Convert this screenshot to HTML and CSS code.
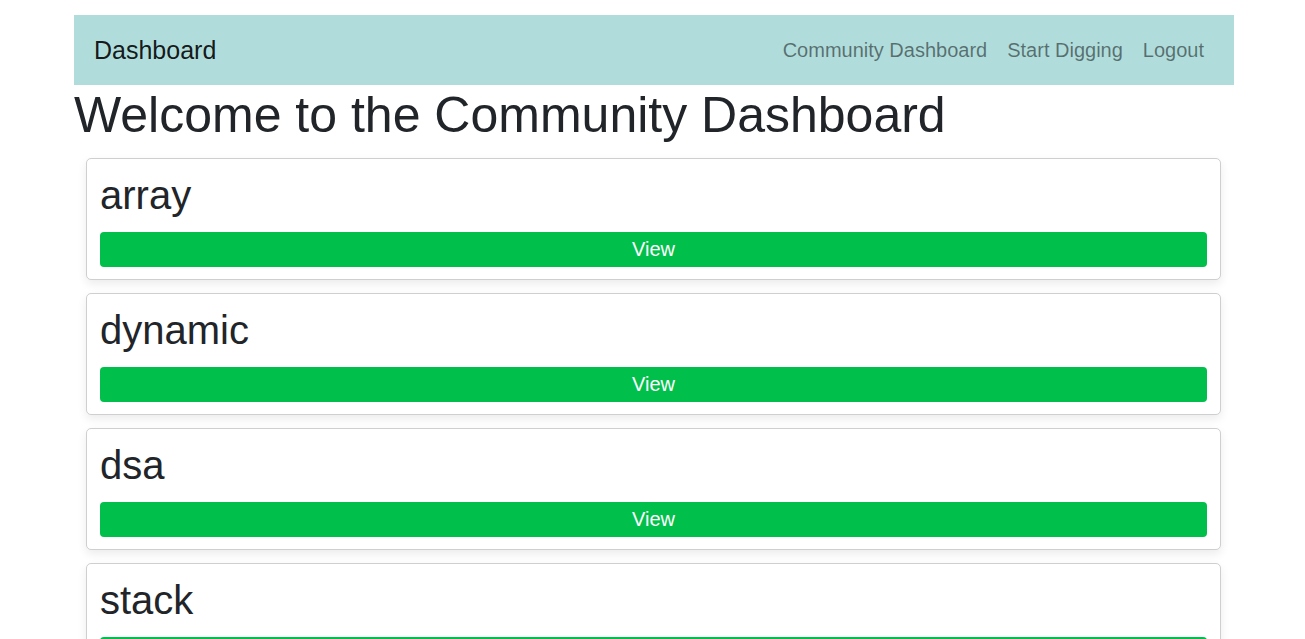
FILE: index.html
```html
<!DOCTYPE html>
<html lang="en">
<head>
<meta charset="utf-8">
<title>Community Dashboard</title>
<link rel="stylesheet" href="styles.css">
</head>
<body>
<div class="container">
  <nav class="navbar">
    <a class="brand" href="#">Dashboard</a>
    <ul class="nav-links">
      <li><a href="#">Community Dashboard</a></li>
      <li><a href="#">Start Digging</a></li>
      <li><a href="#">Logout</a></li>
    </ul>
  </nav>
  <h1 class="page-title">Welcome to the Community Dashboard</h1>
  <div class="card-list">
    <div class="card">
      <h2 class="card-title">array</h2>
      <button class="btn-view">View</button>
    </div>
    <div class="card">
      <h2 class="card-title">dynamic</h2>
      <button class="btn-view">View</button>
    </div>
    <div class="card">
      <h2 class="card-title">dsa</h2>
      <button class="btn-view">View</button>
    </div>
    <div class="card">
      <h2 class="card-title">stack</h2>
      <button class="btn-view">View</button>
    </div>
  </div>
</div>
</body>
</html>
```

FILE: styles.css
```css
* { box-sizing: border-box; }
html, body { margin: 0; padding: 0; background: #fff; }
body {
  font-family: "Liberation Sans", Arial, sans-serif;
  color: #212529;
}
.container {
  width: 1160px;
  margin: 15px 0 0 74px;
}
.navbar {
  height: 70px;
  background: #b0dddc;
  display: flex;
  align-items: center;
  justify-content: space-between;
  padding: 0 20px;
}
.brand {
  font-size: 25px;
  color: rgba(0, 0, 0, 0.9);
  text-decoration: none;
}
.nav-links {
  list-style: none;
  margin: 0;
  padding: 0;
  display: flex;
}
.nav-links a {
  display: block;
  padding: 0 10px;
  font-size: 20px;
  color: rgba(0, 0, 0, 0.5);
  text-decoration: none;
}
.page-title {
  margin: 0;
  font-size: 50px;
  font-weight: 400;
  line-height: 60px;
}
.card-list {
  display: flex;
  flex-direction: column;
  gap: 13px;
  padding: 13px 13px 20px 12px;
}
.card {
  border: 1px solid #cfcfcf;
  border-radius: 5px;
  padding: 12px 13px;
  background: #fff;
  box-shadow: 0 4px 10px rgba(0, 0, 0, 0.08);
}
.card-title {
  margin: 0 0 13px;
  font-size: 40px;
  font-weight: 400;
  line-height: 48px;
}
.btn-view {
  display: block;
  width: 100%;
  height: 35px;
  border: none;
  border-radius: 4px;
  background: #00bf4b;
  color: #fff;
  font-family: "Liberation Sans", Arial, sans-serif;
  font-size: 20px;
  padding: 0;
  cursor: pointer;
}
```
